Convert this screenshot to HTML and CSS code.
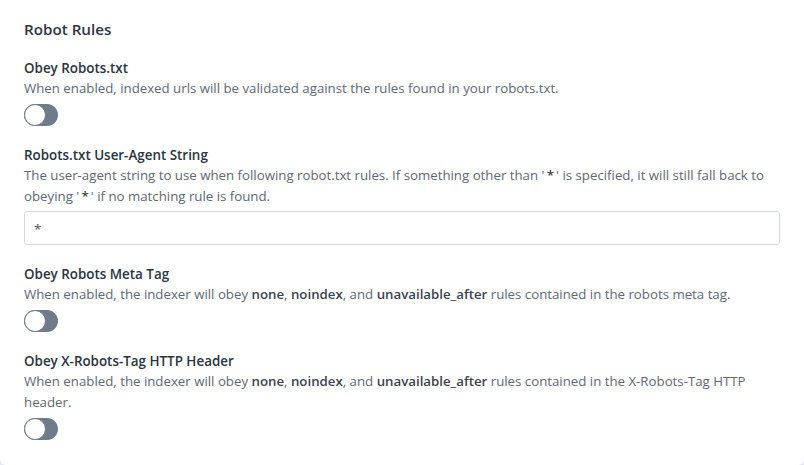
FILE: index.html
```html
<!DOCTYPE html>
<html lang="en">
<head>
<meta charset="utf-8">
<title>Robot Rules</title>
<link rel="stylesheet" href="styles.css">
</head>
<body>
<section class="card">
  <h2 class="card-title">Robot Rules</h2>

  <div class="field">
    <div class="field-label">Obey Robots.txt</div>
    <p class="field-desc">When enabled, indexed urls will be validated against the rules found in your robots.txt.</p>
    <span class="toggle"><span class="knob"></span></span>
  </div>

  <div class="field">
    <div class="field-label">Robots.txt User-Agent String</div>
    <p class="field-desc">The user-agent string to use when following robot.txt rules. If something other than '&#8201;<b>*</b>&#8201;' is specified, it will still fall back to obeying '&#8201;<b>*</b>&#8201;' if no matching rule is found.</p>
    <div class="input">*</div>
  </div>

  <div class="field">
    <div class="field-label">Obey Robots Meta Tag</div>
    <p class="field-desc">When enabled, the indexer will obey <b>none</b>, <b>noindex</b>, and <b>unavailable_after</b> rules contained in the robots meta tag.</p>
    <span class="toggle"><span class="knob"></span></span>
  </div>

  <div class="field">
    <div class="field-label">Obey X-Robots-Tag HTTP Header</div>
    <p class="field-desc">When enabled, the indexer will obey <b>none</b>, <b>noindex</b>, and <b>unavailable_after</b> rules contained in the X-Robots-Tag HTTP header.</p>
    <span class="toggle"><span class="knob"></span></span>
  </div>
</section>
</body>
</html>
```

FILE: styles.css
```css
html, body {
  margin: 0;
  padding: 0;
}
body {
  background: #e3e9f0;
  font-family: "Open Sans", "Noto Sans", sans-serif;
  width: 804px;
  height: 465px;
  overflow: hidden;
}
.card {
  background: #ffffff;
  width: 804px;
  height: 465px;
  box-sizing: border-box;
  padding: 18px 24px 0 24px;
  border-radius: 0 0 6px 6px;
  display: flex;
  flex-direction: column;
  gap: 19px;
}
.card-title {
  margin: 0 0 -1px 0;
  font-size: 15.2px;
  line-height: 22px;
  font-weight: 600;
  color: #2d3642;
}
.field {
  display: flex;
  flex-direction: column;
  align-items: flex-start;
}
.field-label {
  font-size: 13.4px;
  line-height: 20px;
  font-weight: 600;
  color: #2b3440;
}
.field-desc {
  margin: 0;
  font-size: 13.25px;
  line-height: 21px;
  color: #5d6875;
}
.field-desc b {
  font-weight: 600;
  color: #3a4350;
}
.toggle {
  margin-top: 5px;
  width: 34px;
  height: 22px;
  box-sizing: border-box;
  border-radius: 11px;
  background: #6f7b88;
  position: relative;
  display: block;
}
.knob {
  position: absolute;
  left: 0;
  top: 0;
  width: 22px;
  height: 22px;
  box-sizing: border-box;
  border-radius: 50%;
  background: #ffffff;
  border: 1.5px solid #6f7b88;
}
.input {
  margin-top: 4px;
  align-self: stretch;
  height: 34px;
  box-sizing: border-box;
  border: 1px solid #d3d9e0;
  border-radius: 3px;
  padding: 0 0 0 9px;
  font-size: 13.4px;
  line-height: 34px;
  color: #4a5360;
}
```
